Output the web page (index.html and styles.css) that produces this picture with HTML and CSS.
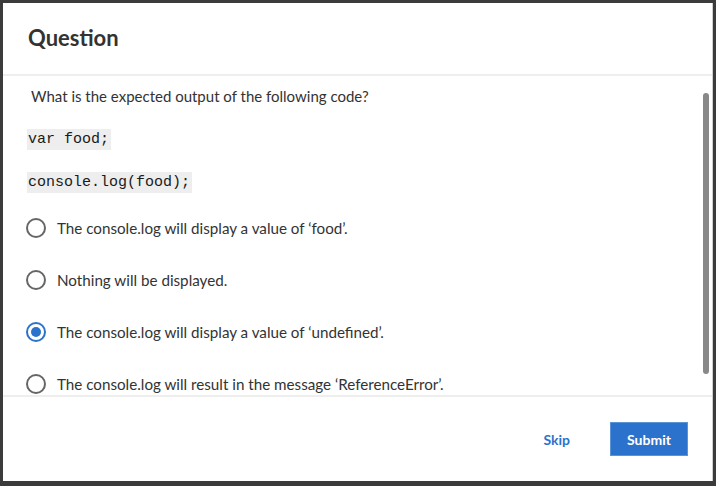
FILE: index.html
```
<!DOCTYPE html>
<html lang="en">
<head>
<meta charset="utf-8">
<title>Question</title>
<link rel="stylesheet" href="styles.css">
</head>
<body>
<div class="modal">
  <header class="modal-header">
    <h1 class="title">Question</h1>
  </header>
  <section class="modal-body">
    <p class="prompt">What is the expected output of the following code?</p>
    <p class="code-line"><code class="code">var food;</code></p>
    <p class="code-line second"><code class="code">console.log(food);</code></p>
    <ul class="options">
      <li class="option"><span class="radio"></span><span class="label">The console.log will display a value of ‘food’.</span></li>
      <li class="option"><span class="radio"></span><span class="label">Nothing will be displayed.</span></li>
      <li class="option"><span class="radio checked"></span><span class="label">The console.log will display a value of ‘undefined’.</span></li>
      <li class="option"><span class="radio"></span><span class="label">The console.log will result in the message ‘ReferenceError’.</span></li>
    </ul>
    <div class="scrollbar"></div>
  </section>
  <footer class="modal-footer">
    <button class="btn-skip">Skip</button>
    <button class="btn-submit">Submit</button>
  </footer>
</div>
</body>
</html>
```
FILE: styles.css
```
html, body {
  margin: 0;
  padding: 0;
  height: 100%;
}
body {
  background: #3b3b3b;
  font-family: Lato, "Open Sans", sans-serif;
  color: #333;
  overflow: hidden;
}
.modal {
  margin: 3px 0 0 3px;
  width: 709px;
  height: 478px;
  background: #fff;
  border-right: 1px solid #cfcfcf;
  display: flex;
  flex-direction: column;
}
.modal-header {
  height: 73px;
  border-bottom: 2px solid #eeeeee;
  display: flex;
  align-items: center;
  padding-left: 25px;
  box-sizing: border-box;
  flex: none;
}
.title {
  margin: 0;
  font-size: 22px;
  font-weight: 700;
  color: #333;
  padding-bottom: 2px;
}
.modal-body {
  position: relative;
  height: 319px;
  flex: none;
  overflow: hidden;
  padding: 10px 0 0 24px;
  box-sizing: border-box;
}
.prompt {
  margin: 0 0 0 4px;
  font-size: 15px;
  line-height: 20px;
}
.code-line {
  margin: 21px 0 0 0;
  line-height: 19px;
  height: 19px;
}
.code-line.second {
  margin-top: 24px;
}
.code {
  font-family: "Liberation Mono", "Courier New", monospace;
  font-size: 15px;
  font-weight: 400;
  background: #eeeeee;
  padding: 2px 2px 2px 1px;
  color: #1a1a1a;
}
.options {
  list-style: none;
  margin: 13px 0 0 0;
  padding: 0;
}
.option {
  height: 52px;
  display: flex;
  align-items: center;
  font-size: 15.2px;
}
.radio {
  width: 20px;
  height: 20px;
  box-sizing: border-box;
  border: 2px solid #666;
  border-radius: 50%;
  margin-left: -1px;
  margin-right: 11px;
  flex: none;
  display: flex;
  align-items: center;
  justify-content: center;
}
.radio.checked {
  border-color: #2b72cc;
}
.radio.checked::after {
  content: "";
  width: 10px;
  height: 10px;
  border-radius: 50%;
  background: #2b72cc;
}
.scrollbar {
  position: absolute;
  right: 3px;
  top: 17px;
  width: 6px;
  height: 281px;
  border-radius: 3px;
  background: #888;
}
.modal-footer {
  flex: 1;
  border-top: 2px solid #eeeeee;
  display: flex;
  align-items: center;
  justify-content: flex-end;
  padding-right: 24px;
}
.btn-skip {
  font-family: inherit;
  font-size: 14px;
  font-weight: 700;
  color: #2b72cc;
  background: none;
  border: none;
  padding: 0 20px;
  margin-right: 20px;
  height: 33px;
  cursor: pointer;
}
.btn-submit {
  font-family: inherit;
  font-size: 14px;
  font-weight: 700;
  color: #fff;
  background: #2b72cc;
  border: 1px solid #5b93d9;
  width: 78px;
  height: 34px;
  padding: 0;
  cursor: pointer;
}
```
